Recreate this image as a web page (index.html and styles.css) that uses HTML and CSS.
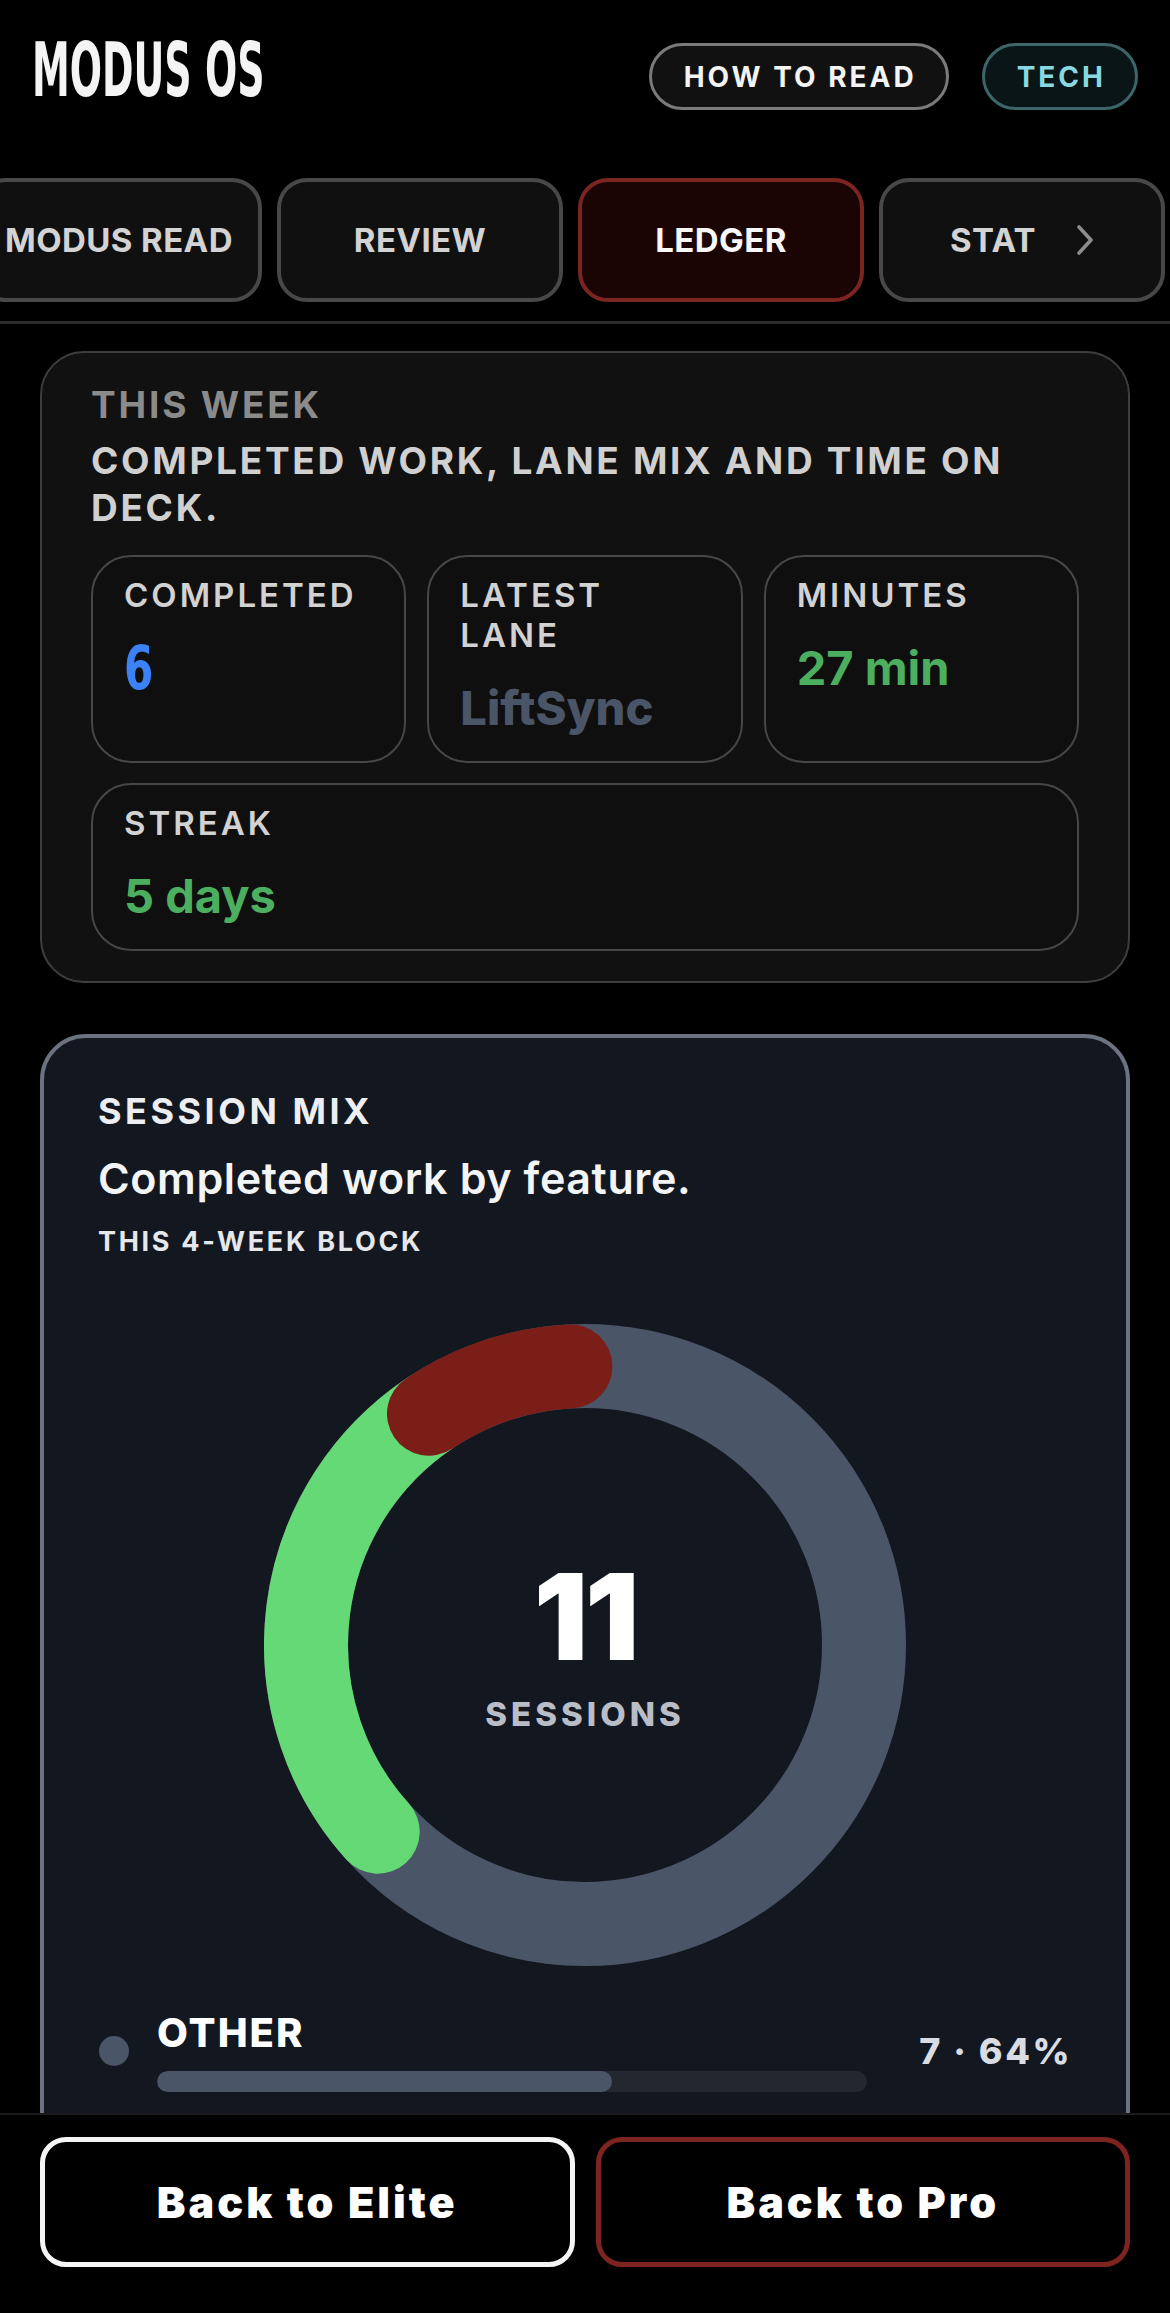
FILE: index.html
```html
<!DOCTYPE html>
<html lang="en">
<head>
<meta charset="utf-8">
<title>MODUS OS — Ledger</title>
<link rel="stylesheet" href="styles.css">
</head>
<body>
<div class="app">
  <header class="topbar">
    <div class="logo">MODUS OS</div>
    <div class="pills">
      <button class="pill">HOW TO READ</button>
      <button class="pill pill-tech">TECH</button>
    </div>
  </header>

  <nav class="tabs">
    <div class="tab-track">
      <div class="tab">MODUS READ</div>
      <div class="tab">REVIEW</div>
      <div class="tab tab-active">LEDGER</div>
      <div class="tab tab-more">
        <span>STAT</span>
        <svg class="chev" width="18" height="32" viewBox="0 0 18 32"><polyline points="3,3 15,16 3,29" fill="none" stroke="#8d8d8d" stroke-width="3.6" stroke-linecap="round" stroke-linejoin="round"/></svg>
      </div>
    </div>
  </nav>

  <main class="content">
    <section class="card week">
      <div class="kicker">THIS WEEK</div>
      <h2 class="week-title">COMPLETED WORK, LANE MIX AND TIME ON DECK.</h2>
      <div class="stats">
        <div class="stat">
          <div class="stat-label">COMPLETED</div>
          <div class="stat-value"><span class="num-cond">6</span></div>
        </div>
        <div class="stat">
          <div class="stat-label">LATEST LANE</div>
          <div class="stat-value slate">LiftSync</div>
        </div>
        <div class="stat">
          <div class="stat-label">MINUTES</div>
          <div class="stat-value green">27 min</div>
        </div>
        <div class="stat stat-wide">
          <div class="stat-label">STREAK</div>
          <div class="stat-value green">5 days</div>
        </div>
      </div>
    </section>

    <section class="card mix">
      <div class="mix-kicker">SESSION MIX</div>
      <h2 class="mix-title">Completed work by feature.</h2>
      <div class="mix-sub">THIS 4-WEEK BLOCK</div>

      <div class="donut">
        <svg width="642" height="642" viewBox="0 0 642 642">
          <circle cx="321" cy="321" r="279" fill="none" stroke="#4a5568" stroke-width="84"/>
          <path d="M113.7 507.7 A279 279 0 0 1 165.0 89.7" fill="none" stroke="#65d976" stroke-width="84" stroke-linecap="round"/>
          <path d="M165.0 89.7 A279 279 0 0 1 306.4 42.4" fill="none" stroke="#7a1e17" stroke-width="84" stroke-linecap="round"/>
        </svg>
        <div class="donut-center">
          <div class="donut-num">11</div>
          <div class="donut-label">SESSIONS</div>
        </div>
      </div>

      <div class="legend">
        <div class="legend-row">
          <span class="dot dot-slate"></span>
          <div class="legend-main">
            <div class="legend-name">OTHER</div>
            <div class="bar"><div class="bar-fill fill-slate" style="width:64%"></div></div>
          </div>
          <div class="legend-val">7 · 64%</div>
        </div>
      </div>
    </section>
  </main>

  <footer class="bottombar">
    <button class="cta cta-elite">Back to Elite</button>
    <button class="cta cta-pro">Back to Pro</button>
  </footer>
</div>
</body>
</html>
```
FILE: styles.css
```css
* { box-sizing: border-box; }
html, body { margin: 0; padding: 0; background: #000; }
body {
  font-family: Inter, "Noto Sans", "Liberation Sans", sans-serif;
  color: #f2f2f2;
}
button { font-family: inherit; cursor: pointer; }

.app {
  height: 100vh;
  display: flex;
  flex-direction: column;
  overflow: hidden;
  background: #000;
}

/* ---------- top bar ---------- */
.topbar {
  display: flex;
  justify-content: space-between;
  align-items: flex-start;
  padding: 43px 32px 0 32px;
  flex: 0 0 auto;
}
.logo {
  font-family: "DejaVu Sans Condensed", "DejaVu Sans", sans-serif;
  font-stretch: condensed;
  font-weight: 700;
  font-size: 74px;
  line-height: 54px;
  height: 52px;
  color: #f4f4f4;
  transform: scaleX(0.57);
  transform-origin: left center;
  white-space: nowrap;
}
.pills { display: flex; gap: 33px; }
.pill {
  height: 67px;
  padding: 0 29px 0 32px;
  border: 3px solid #7a7a7a;
  border-radius: 34px;
  background: #111;
  color: #f3f3f3;
  font-size: 28px;
  font-weight: 700;
  letter-spacing: 3px;
  display: flex;
  align-items: center;
}
.pill-tech {
  border-color: #3c6669;
  background: #0a1517;
  color: #88d8e1;
}

/* ---------- tabs ---------- */
.tabs {
  flex: 0 0 auto;
  margin-top: 68px;
  padding-bottom: 19px;
  border-bottom: 3px solid #2c2c2c;
  overflow: hidden;
}
.tab-track {
  display: flex;
  gap: 15px;
  margin-left: -24px;
}
.tab {
  flex: 0 0 286px;
  height: 124px;
  border: 4px solid #484848;
  border-radius: 30px;
  background: #101010;
  color: #d3d3d3;
  font-size: 33px;
  font-weight: 700;
  letter-spacing: 0.4px;
  display: flex;
  align-items: center;
  justify-content: center;
  white-space: nowrap;
}
.tab-active {
  border-color: #7b2520;
  background: #1b0404;
  color: #f7f7f7;
}
.tab-more { gap: 40px; }
.chev { display: block; }

/* ---------- content ---------- */
.content {
  flex: 1 1 auto;
  min-height: 0;
  overflow: hidden;
  padding: 27px 40px 0 40px;
}
.card { margin: 0; }

.week {
  border: 2px solid #3e3e3e;
  border-radius: 44px;
  background: #111111;
  padding: 30px 49px 30px 49px;
}
.kicker {
  font-size: 37px;
  line-height: 44px;
  font-weight: 700;
  letter-spacing: 2.8px;
  color: #8b8b8b;
}
.week-title {
  margin: 10px 0 0 0;
  font-size: 37px;
  line-height: 47px;
  font-weight: 700;
  letter-spacing: 2.7px;
  color: #d0d0d0;
}
.stats {
  margin-top: 24px;
  display: grid;
  grid-template-columns: repeat(3, 1fr);
  gap: 20px 21px;
}
.stat {
  border: 2px solid #474747;
  border-radius: 40px;
  background: #0f0f0f;
  padding: 18px 30px 25px 31px;
}
.stat-wide { grid-column: 1 / -1; }
.stat-label {
  font-size: 33px;
  line-height: 40px;
  font-weight: 600;
  letter-spacing: 3px;
  color: #d2d2d2;
}
.stat-value {
  margin-top: 25px;
  font-size: 47px;
  line-height: 56px;
  font-weight: 700;
  white-space: nowrap;
}
.num-cond {
  display: inline-block;
  font-family: "DejaVu Sans Condensed", "DejaVu Sans", sans-serif;
  font-stretch: condensed;
  font-size: 60px;
  font-weight: 700;
  color: #3b82f6;
  transform: scaleX(0.78);
  transform-origin: left center;
}
.slate { color: #4b5568; font-weight: 800; }
.green { color: #4caf5f; }

/* ---------- session mix ---------- */
.mix {
  margin-top: 51px;
  border: 4px solid #6b7280;
  border-radius: 46px;
  background: #131720;
  padding: 51px 54px 60px 54px;
}
.mix-kicker {
  font-size: 36px;
  line-height: 44px;
  font-weight: 700;
  letter-spacing: 3.5px;
  color: #eceef2;
}
.mix-title {
  margin: 20px 0 0 0;
  font-size: 43px;
  line-height: 50px;
  font-weight: 600;
  letter-spacing: 0.6px;
  color: #f3f4f6;
}
.mix-sub {
  margin-top: 22px;
  font-size: 27px;
  line-height: 34px;
  font-weight: 700;
  letter-spacing: 2.7px;
  color: #e5e7eb;
}
.donut {
  position: relative;
  width: 642px;
  height: 642px;
  margin: 65px auto 0 auto;
}
.donut svg { display: block; }
.donut-center {
  position: absolute;
  inset: 0;
  display: flex;
  flex-direction: column;
  align-items: center;
  justify-content: center;
}
.donut-num {
  font-size: 120px;
  line-height: 120px;
  font-weight: 900;
  letter-spacing: -3px;
  color: #ffffff;
}
.donut-label {
  margin-top: 17px;
  font-size: 33px;
  line-height: 40px;
  font-weight: 800;
  letter-spacing: 4px;
  color: #b9bdc7;
}

.legend { margin-top: 43px; }
.legend-row {
  display: flex;
  align-items: center;
}
.dot {
  flex: 0 0 30px;
  width: 30px;
  height: 30px;
  border-radius: 50%;
  margin-left: 1px;
  margin-right: 28px;
}
.dot-slate, .fill-slate { background: #4a5568; }
.legend-main { flex: 1 1 auto; min-width: 0; }
.legend-name {
  font-size: 40px;
  line-height: 48px;
  font-weight: 800;
  letter-spacing: 2px;
  color: #ffffff;
}
.bar {
  margin-top: 14px;
  height: 21px;
  border-radius: 11px;
  background: #23272f;
  overflow: hidden;
}
.bar-fill { height: 100%; border-radius: 11px; }
.legend-val {
  flex: 0 0 auto;
  margin-left: 52px;
  white-space: nowrap;
  text-align: right;
  font-size: 36px;
  font-weight: 800;
  letter-spacing: 2.5px;
  color: #d9dce3;
}

/* ---------- bottom bar ---------- */
.bottombar {
  flex: 0 0 auto;
  border-top: 2px solid #1b1b1b;
  background: #000;
  padding: 22px 40px 46px 40px;
  display: grid;
  grid-template-columns: 1fr 1fr;
  gap: 21px;
}
.cta {
  height: 130px;
  border: 5px solid #f5f5f5;
  border-radius: 26px;
  background: #000;
  color: #ffffff;
  font-size: 43px;
  font-weight: 900;
  letter-spacing: 3px;
}
.cta-pro { border-color: #7e2420; }
```
